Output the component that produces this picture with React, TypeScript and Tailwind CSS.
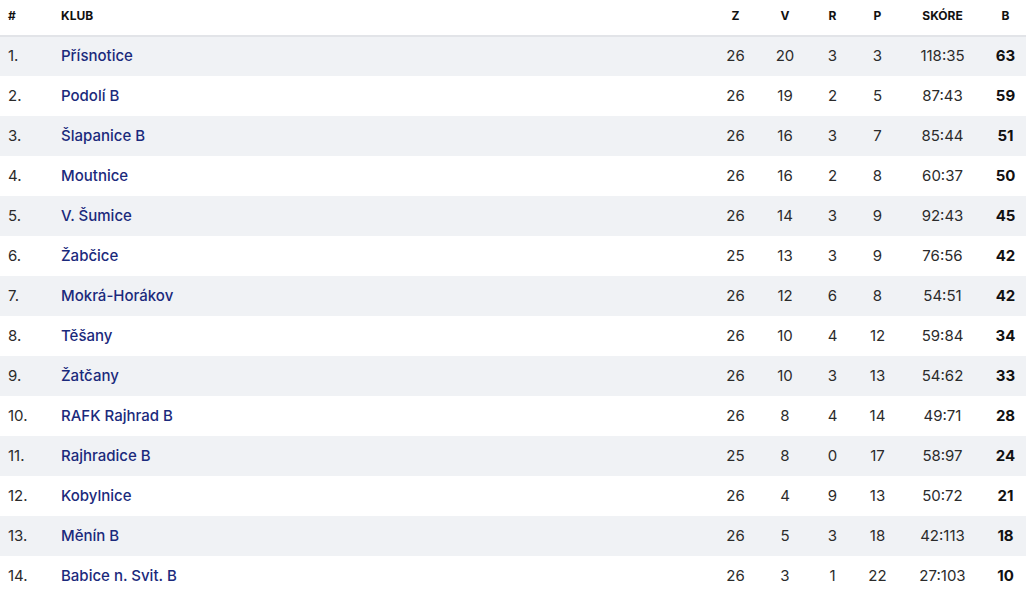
import React from 'react';

type Row = [string, number, number, number, number, string, number];

const rows: Row[] = [
  ['Přísnotice', 26, 20, 3, 3, '118:35', 63],
  ['Podolí B', 26, 19, 2, 5, '87:43', 59],
  ['Šlapanice B', 26, 16, 3, 7, '85:44', 51],
  ['Moutnice', 26, 16, 2, 8, '60:37', 50],
  ['V. Šumice', 26, 14, 3, 9, '92:43', 45],
  ['Žabčice', 25, 13, 3, 9, '76:56', 42],
  ['Mokrá-Horákov', 26, 12, 6, 8, '54:51', 42],
  ['Těšany', 26, 10, 4, 12, '59:84', 34],
  ['Žatčany', 26, 10, 3, 13, '54:62', 33],
  ['RAFK Rajhrad B', 26, 8, 4, 14, '49:71', 28],
  ['Rajhradice B', 25, 8, 0, 17, '58:97', 24],
  ['Kobylnice', 26, 4, 9, 13, '50:72', 21],
  ['Měnín B', 26, 5, 3, 18, '42:113', 18],
  ['Babice n. Svit. B', 26, 3, 1, 22, '27:103', 10],
];

const App = () => {
  return (
    <div className="w-[1026px] bg-white font-['Inter',sans-serif] text-[#2b2b2b]">
      <table className="w-full table-fixed border-collapse">
        <colgroup>
          <col className="w-[61px]" />
          <col />
          <col className="w-[49px]" />
          <col className="w-[50px]" />
          <col className="w-[45px]" />
          <col className="w-[45px]" />
          <col className="w-[85px]" />
          <col className="w-[41px]" />
        </colgroup>
        <thead>
          <tr className="h-[36px] border-b-2 border-[#e2e4e8] text-[12px] font-bold text-[#111] uppercase">
            <th className="pl-2 pb-[3px] text-left font-bold">#</th>
            <th className="pb-[3px] text-left font-bold">Klub</th>
            <th className="pb-[3px] text-center font-bold">Z</th>
            <th className="pb-[3px] text-center font-bold">V</th>
            <th className="pb-[3px] text-center font-bold">R</th>
            <th className="pb-[3px] text-center font-bold">P</th>
            <th className="pb-[3px] text-center font-bold">Skóre</th>
            <th className="pb-[3px] text-center font-bold">B</th>
          </tr>
        </thead>
        <tbody className="text-[15px]">
          {rows.map((r, i) => (
            <tr key={r[0]} className={`h-10 ${i % 2 === 0 ? 'bg-[#f0f2f5]' : 'bg-white'}`}>
              <td className="pl-2">{i + 1}.</td>
              <td className="font-medium text-[#1b2a7c]">{r[0]}</td>
              <td className="text-center">{r[1]}</td>
              <td className="text-center">{r[2]}</td>
              <td className="text-center">{r[3]}</td>
              <td className="text-center">{r[4]}</td>
              <td className="text-center">{r[5]}</td>
              <td className="text-center font-bold text-[#111]">{r[6]}</td>
            </tr>
          ))}
        </tbody>
      </table>
    </div>
  );
};

export default App;
